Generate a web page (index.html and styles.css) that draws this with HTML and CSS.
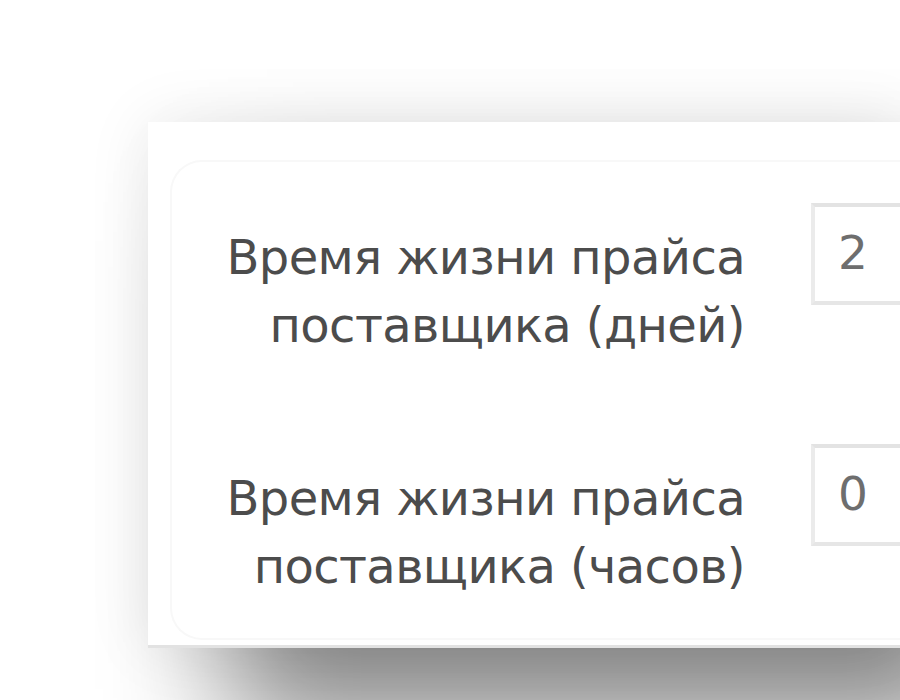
FILE: index.html
```html
<!DOCTYPE html>
<html lang="ru">
<head>
<meta charset="utf-8">
<title>Настройки</title>
<link rel="stylesheet" href="styles.css">
</head>
<body>
<div class="card">
  <div class="panel">
    <div class="row">
      <label class="label" for="days">Время жизни прайса<br>поставщика (дней)</label>
      <input class="field" id="days" type="text" value="2">
    </div>
    <div class="row">
      <label class="label" for="hours">Время жизни прайса<br>поставщика (часов)</label>
      <input class="field" id="hours" type="text" value="0">
    </div>
  </div>
</div>
</body>
</html>
```

FILE: styles.css
```css
html, body {
  margin: 0;
  padding: 0;
  background: #ffffff;
  overflow: hidden;
  width: 900px;
  height: 700px;
}

body {
  font-family: "DejaVu Sans", Verdana, sans-serif;
  color: #4c4c4c;
}

.card {
  margin: 122px 0 0 148px;
  padding: 38px 0 0 22px;
  width: 752px;
  height: 526px;
  background: #ffffff;
  box-shadow: 0 0 60px rgba(0, 0, 0, 0.09), 80px 80px 110px rgba(0, 0, 0, 0.46);
  border-bottom: 3px solid #e2e2e2;
  box-sizing: border-box;
}

.panel {
  height: 480px;
  border: 2px solid #f8f8f8;
  border-right: none;
  border-radius: 32px 0 0 32px;
  padding-top: 41px;
  box-sizing: border-box;
  display: flex;
  flex-direction: column;
  gap: 85px;
}

.row {
  display: flex;
  align-items: flex-start;
  gap: 66px;
}

.label {
  flex: 0 0 573px;
  margin-top: 20px;
  text-align: right;
  font-size: 48px;
  line-height: 68px;
  letter-spacing: -0.6px;
}

.field {
  flex: 0 0 200px;
  height: 102px;
  box-sizing: border-box;
  border: 4px solid #ebebeb;
  border-top-color: #e3e3e3;
  border-bottom-color: #e6e6e6;
  padding: 0 0 4px 23px;
  font-family: "DejaVu Sans", Verdana, sans-serif;
  font-size: 47px;
  color: #6e6e6e;
  background: #ffffff;
  outline: none;
}
```
